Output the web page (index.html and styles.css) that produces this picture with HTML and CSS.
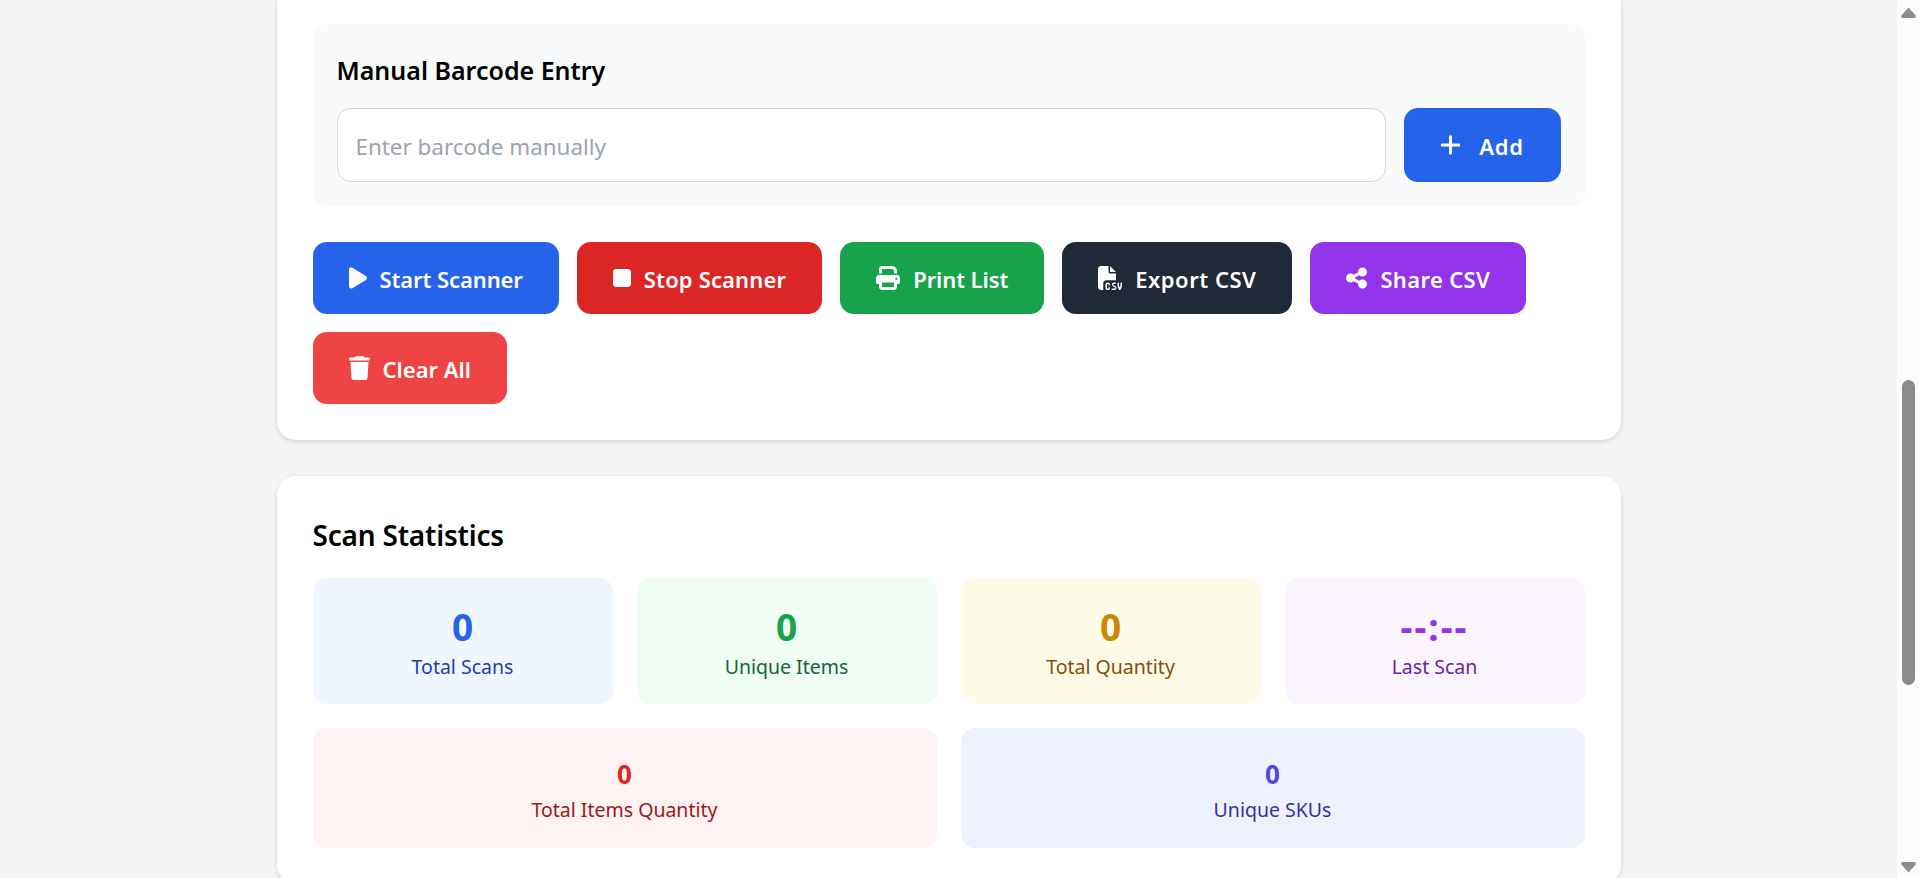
FILE: index.html
```html
<!DOCTYPE html>
<html lang="en">
<head>
<meta charset="utf-8">
<title>Barcode Scanner</title>
<link rel="stylesheet" href="styles.css">
</head>
<body>
<div class="viewport">
  <main class="page">
    <section class="card card-top">
      <div class="manual">
        <h3 class="manual-title">Manual Barcode Entry</h3>
        <div class="manual-row">
          <input class="manual-input" type="text" placeholder="Enter barcode manually">
          <button class="btn btn-add" type="button">
            <svg class="icon" viewBox="0 0 448 512"><path d="M256 80c0-17.7-14.3-32-32-32s-32 14.3-32 32V224H48c-17.7 0-32 14.3-32 32s14.3 32 32 32H192V432c0 17.7 14.3 32 32 32s32-14.3 32-32V288H400c17.7 0 32-14.3 32-32s-14.3-32-32-32H256V80z"/></svg>
            <span>Add</span>
          </button>
        </div>
      </div>
      <div class="actions">
        <button class="btn btn-blue" type="button">
          <svg class="icon" viewBox="0 0 384 512"><path d="M73 39c-14.8-9.1-33.4-9.4-48.5-.9S0 62.6 0 80V432c0 17.4 9.4 33.4 24.5 41.9s33.7 8.1 48.5-.9L361 297c14.3-8.7 23-24.2 23-41s-8.7-32.2-23-41L73 39z"/></svg>
          <span>Start Scanner</span>
        </button>
        <button class="btn btn-red" type="button">
          <svg class="icon" viewBox="0 0 384 512"><path d="M0 128C0 92.7 28.7 64 64 64H320c35.3 0 64 28.7 64 64V384c0 35.3-28.7 64-64 64H64c-35.3 0-64-28.7-64-64V128z"/></svg>
          <span>Stop Scanner</span>
        </button>
        <button class="btn btn-green" type="button">
          <svg class="icon" viewBox="0 0 512 512"><path d="M128 0C92.7 0 64 28.7 64 64v96h64V64H354.7L384 93.3V160h64V93.3c0-17-6.7-33.3-18.7-45.3L400 18.7C388 6.7 371.7 0 354.7 0H128zM384 352v32 64H128V384 368 352H384zm64 32h32c17.7 0 32-14.3 32-32V256c0-35.3-28.7-64-64-64H64c-35.3 0-64 28.7-64 64v96c0 17.7 14.3 32 32 32H64v64c0 35.3 28.7 64 64 64H384c35.3 0 64-28.7 64-64V384zM432 248a24 24 0 1 1 0 48 24 24 0 1 1 0-48z"/></svg>
          <span>Print List</span>
        </button>
        <button class="btn btn-dark" type="button">
          <svg class="icon" viewBox="0 0 512 512"><path d="M0 64C0 28.7 28.7 0 64 0H224V128c0 17.7 14.3 32 32 32H384V304H176c-35.3 0-64 28.7-64 64V512H64c-35.3 0-64-28.7-64-64V64zm384 64H256V0L384 128zM200 352h16c22.1 0 40 17.9 40 40v8c0 8.8-7.2 16-16 16s-16-7.2-16-16v-8c0-4.4-3.6-8-8-8H200c-4.4 0-8 3.6-8 8v80c0 4.4 3.6 8 8 8h16c4.4 0 8-3.6 8-8v-8c0-8.8 7.2-16 16-16s16 7.2 16 16v8c0 22.1-17.9 40-40 40H200c-22.1 0-40-17.9-40-40V392c0-22.1 17.9-40 40-40zm133.1 0H368c8.8 0 16 7.2 16 16s-7.2 16-16 16H333.1c-7.2 0-13.1 5.9-13.1 13.1c0 5.2 3 9.9 7.8 12l37.4 16.6c16.3 7.2 26.8 23.4 26.8 41.2c0 24.9-20.2 45.1-45.1 45.1H304c-8.8 0-16-7.2-16-16s7.2-16 16-16h52.9c7.2 0 13.1-5.9 13.1-13.1c0-5.2-3-9.9-7.8-12l-37.4-16.6c-16.3-7.2-26.8-23.4-26.8-41.2c0-24.9 20.2-45.1 45.1-45.1zm98.9 0c8.8 0 16 7.2 16 16v31.6c0 23 5.5 45.6 16 66c10.5-20.3 16-42.9 16-66V368c0-8.8 7.2-16 16-16s16 7.2 16 16v31.6c0 34.7-10.3 68.7-29.6 97.6l-5.1 7.7c-3 4.5-8 7.1-13.3 7.1s-10.3-2.7-13.3-7.1l-5.1-7.7c-19.3-28.9-29.6-62.9-29.6-97.6V368c0-8.8 7.2-16 16-16z"/></svg>
          <span>Export CSV</span>
        </button>
        <button class="btn btn-purple" type="button">
          <svg class="icon" viewBox="0 0 448 512"><path d="M352 224c53 0 96-43 96-96s-43-96-96-96s-96 43-96 96c0 4 .2 8 .7 11.9l-94.1 47C145.4 170.2 121.9 160 96 160c-53 0-96 43-96 96s43 96 96 96c25.9 0 49.4-10.2 66.6-26.9l94.1 47c-.5 3.9-.7 7.8-.7 11.9c0 53 43 96 96 96s96-43 96-96s-43-96-96-96c-25.9 0-49.4 10.2-66.6 26.9l-94.1-47c.5-3.9 .7-7.8 .7-11.9s-.2-8-.7-11.9l94.1-47C302.6 213.8 326.1 224 352 224z"/></svg>
          <span>Share CSV</span>
        </button>
        <button class="btn btn-rose" type="button">
          <svg class="icon" viewBox="0 0 448 512"><path d="M135.2 17.7L128 32H32C14.3 32 0 46.3 0 64S14.3 96 32 96H416c17.7 0 32-14.3 32-32s-14.3-32-32-32H320l-7.2-14.3C307.4 6.8 296.3 0 284.2 0H163.8c-12.1 0-23.2 6.8-28.6 17.7zM416 128H32L53.2 467c1.6 25.3 22.6 45 47.9 45H346.9c25.3 0 46.3-19.7 47.9-45L416 128z"/></svg>
          <span>Clear All</span>
        </button>
      </div>
    </section>

    <section class="card card-stats">
      <h2 class="stats-title">Scan Statistics</h2>
      <div class="stats-grid">
        <div class="stat stat-blue"><div class="stat-num">0</div><div class="stat-label">Total Scans</div></div>
        <div class="stat stat-green"><div class="stat-num">0</div><div class="stat-label">Unique Items</div></div>
        <div class="stat stat-yellow"><div class="stat-num">0</div><div class="stat-label">Total Quantity</div></div>
        <div class="stat stat-purple"><div class="stat-num stat-time">--:--</div><div class="stat-label">Last Scan</div></div>
        <div class="stat stat-wide stat-red"><div class="stat-num">0</div><div class="stat-label">Total Items Quantity</div></div>
        <div class="stat stat-wide stat-indigo"><div class="stat-num">0</div><div class="stat-label">Unique SKUs</div></div>
      </div>
    </section>
  </main>
  <aside class="scrollbar">
    <svg class="sb-arrow sb-up" viewBox="0 0 15 11"><path d="M7.5 0.5 L15 9 Q15 11 13 11 H2 Q0 11 0 9 Z"/></svg>
    <div class="sb-thumb"></div>
    <svg class="sb-arrow sb-down" viewBox="0 0 15 11"><path d="M7.5 10.5 L15 2 Q15 0 13 0 H2 Q0 0 0 2 Z"/></svg>
  </aside>
</div>
</body>
</html>
```
FILE: styles.css
```css
* { box-sizing: border-box; }
html, body { margin: 0; padding: 0; height: 100%; overflow: hidden; }
body { font-family: "Noto Sans", "Open Sans", "Liberation Sans", sans-serif; color: #000; background: #f3f4f6; }

.viewport { display: flex; height: 878px; width: 1920px; overflow: hidden; }
.page { flex: 0 0 1897px; width: 1897px; height: 878px; overflow: hidden; display: flex; flex-direction: column; align-items: center; gap: 36px; }

.card { width: 1344px; flex: none; background: #fff; padding: 36px; box-shadow: 0 1px 4px rgba(0,0,0,.1), 0 4px 8px -2px rgba(0,0,0,.06); }
.card-top { padding-top: 24px; border-radius: 0 0 19px 19px; }
.card-stats { border-radius: 19px; padding-bottom: 36px; }

.manual { background: #f9fafb; border-radius: 14px; padding: 24px; }
.manual-title { margin: 0 0 16px; font-size: 25px; line-height: 44px; font-weight: 600; }
.manual-row { display: flex; gap: 18px; }
.manual-input { flex: 1; min-width: 0; height: 74px; border: 1px solid #d1d5db; border-radius: 14px; background: #fff; padding: 2px 18px 0; font: inherit; font-size: 22.4px; color: #111; outline: none; }
.manual-input::placeholder { color: #9ca3af; opacity: 1; }

.btn { display: inline-flex; align-items: center; gap: 13px; height: 72px; padding: 0 36px; border: 0; border-radius: 14px; color: #fff; font: inherit; font-size: 22px; font-weight: 600; white-space: nowrap; }
.btn span { padding-top: 2px; }
.icon { height: 24px; width: auto; fill: currentColor; flex: none; }
.btn-add { height: 74px; width: 157px; justify-content: center; background: #2563eb; padding: 0; gap: 18px; letter-spacing: 0.8px; }
.btn-blue { background: #2563eb; letter-spacing: -0.1px; }
.btn-red { background: #dc2626; letter-spacing: 0.15px; }
.btn-green { background: #16a34a; letter-spacing: -0.1px; }
.btn-dark { background: #1f2937; letter-spacing: 0.5px; }
.btn-purple { background: #9333ea; letter-spacing: 0.35px; }
.btn-rose { background: #ef4444; }

.actions { display: flex; flex-wrap: wrap; gap: 18px; margin-top: 36px; }

.stats-title { margin: 0 0 20px; font-size: 28px; line-height: 46px; font-weight: 600; letter-spacing: -0.2px; }
.stats-grid { display: grid; grid-template-columns: repeat(4, 300px); grid-template-rows: 126px 120px; gap: 24px; }

.stat { border-radius: 14px; display: flex; flex-direction: column; align-items: center; padding-top: 25px; text-align: center; }
.stat-wide { grid-column: span 2; padding-top: 27px; }
.stat-num { font-size: 37px; line-height: 48px; font-weight: 700; }
.stat-time { letter-spacing: 2px; }
.stat-wide .stat-num { font-size: 26px; line-height: 38px; }
.stat-label { font-size: 19.5px; line-height: 28px; margin-top: 2px; }
.stat-wide .stat-label { margin-top: 3px; }

.stat-blue { background: #eff6ff; } .stat-blue .stat-num { color: #2563eb; } .stat-blue .stat-label { color: #1e40af; }
.stat-green { background: #f0fdf4; } .stat-green .stat-num { color: #16a34a; } .stat-green .stat-label { color: #166534; }
.stat-yellow { background: #fefce8; } .stat-yellow .stat-num { color: #ca8a04; } .stat-yellow .stat-label { color: #854d0e; }
.stat-purple { background: #faf5ff; } .stat-purple .stat-num { color: #9333ea; } .stat-purple .stat-label { color: #6b21a8; }
.stat-red { background: #fef2f2; } .stat-red .stat-num { color: #dc2626; } .stat-red .stat-label { color: #991b1b; }
.stat-indigo { background: #eef2ff; } .stat-indigo .stat-num { color: #4f46e5; } .stat-indigo .stat-label { color: #3730a3; }

.scrollbar { flex: 0 0 23px; height: 878px; background: #fcfcfc; display: flex; flex-direction: column; align-items: center; }
.sb-arrow { width: 15px; height: 11px; fill: #8b8b8b; flex: none; }
.sb-up { margin-top: 7px; }
.sb-thumb { width: 13px; height: 305px; margin-top: 362px; background: #8b8b8b; border-radius: 7px; flex: none; }
.sb-down { margin-top: auto; margin-bottom: 5px; }
```
